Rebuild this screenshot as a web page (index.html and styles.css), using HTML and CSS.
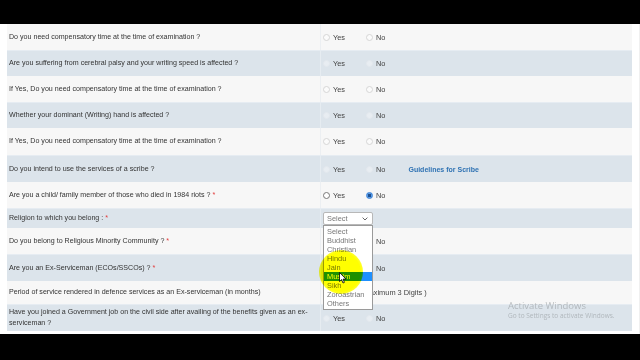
FILE: index.html
```html
<!DOCTYPE html>
<html>
<head>
<meta charset="utf-8">
<link rel="stylesheet" href="styles.css">
</head>
<body>
<div class="screen">
  <div class="bar top"></div>
  <div class="page">
    <div class="rows">
      <div class="row light h26">
        <div class="q">Do you need compensatory time at the time of examination ?</div>
        <div class="a"><span class="opt yes"><i class="radio"></i>Yes</span><span class="opt"><i class="radio"></i>No</span></div>
      </div>
      <div class="row blue h26">
        <div class="q">Are you suffering from cerebral palsy and your writing speed is affected ?</div>
        <div class="a"><span class="opt yes"><i class="radio"></i>Yes</span><span class="opt"><i class="radio"></i>No</span></div>
      </div>
      <div class="row light h26">
        <div class="q">If Yes, Do you need compensatory time at the time of examination ?</div>
        <div class="a"><span class="opt yes"><i class="radio"></i>Yes</span><span class="opt"><i class="radio"></i>No</span></div>
      </div>
      <div class="row blue h26">
        <div class="q">Whether your dominant (Writing) hand is affected ?</div>
        <div class="a"><span class="opt yes"><i class="radio"></i>Yes</span><span class="opt"><i class="radio"></i>No</span></div>
      </div>
      <div class="row light h27">
        <div class="q">If Yes, Do you need compensatory time at the time of examination ?</div>
        <div class="a"><span class="opt yes"><i class="radio"></i>Yes</span><span class="opt"><i class="radio"></i>No</span></div>
      </div>
      <div class="row blue h27">
        <div class="q">Do you intend to use the services of a scribe ?</div>
        <div class="a"><span class="opt yes"><i class="radio"></i>Yes</span><span class="opt"><i class="radio"></i>No</span><a class="guide">Guidelines for Scribe</a></div>
      </div>
      <div class="row light h26">
        <div class="q">Are you a child/ family member of those who died in 1984 riots ? <span class="req">*</span></div>
        <div class="a"><span class="opt yes"><i class="radio dark"></i>Yes</span><span class="opt"><i class="radio checked"></i>No</span></div>
      </div>
      <div class="row blue h20">
        <div class="q">Religion to which you belong : <span class="req">*</span></div>
        <div class="a">
          <div class="select">
            <span>Select</span>
            <svg class="chev" width="6" height="4" viewBox="0 0 6 4"><path d="M0.6 0.6 L3 3 L5.4 0.6" fill="none" stroke="#666" stroke-width="1"/></svg>
            <ul class="list">
              <li>Select</li>
              <li>Buddhist</li>
              <li>Christian</li>
              <li>Hindu</li>
              <li>Jain</li>
              <li class="hl">Muslim</li>
              <li>Sikh</li>
              <li>Zoroastrian</li>
              <li>Others</li>
            </ul>
          </div>
        </div>
      </div>
      <div class="row light h26">
        <div class="q">Do you belong to Religious Minority Community ? <span class="req">*</span></div>
        <div class="a"><span class="opt yes"><i class="radio"></i>Yes</span><span class="opt"><i class="radio"></i>No</span></div>
      </div>
      <div class="row blue h27">
        <div class="q">Are you an Ex-Serviceman (ECOs/SSCOs) ? <span class="req">*</span></div>
        <div class="a"><span class="opt yes"><i class="radio"></i>Yes</span><span class="opt"><i class="radio"></i>No</span></div>
      </div>
      <div class="row light h23">
        <div class="q">Period of service rendered in defence services as an Ex-serviceman (in months)</div>
        <div class="a"><span class="inputbox"></span><span class="hint">( Maximum 3 Digits )</span></div>
      </div>
      <div class="row blue h27">
        <div class="q two">Have you joined a Government job on the civil side after availing of the benefits given as an ex-serviceman ?</div>
        <div class="a"><span class="opt yes"><i class="radio"></i>Yes</span><span class="opt"><i class="radio"></i>No</span></div>
      </div>
    </div>
    <div class="spot"></div>
    <svg class="cursor" width="8" height="12" viewBox="0 0 8 12"><path d="M0.5 0.5 L0.5 9.5 L2.6 7.6 L4 11 L5.4 10.4 L4.1 7.1 L7 7.1 Z" fill="#fff" stroke="#000" stroke-width="0.8" stroke-linejoin="round"/></svg>
    <div class="watermark">
      <div class="wm1">Activate Windows</div>
      <div class="wm2">Go to Settings to activate Windows.</div>
    </div>
  </div>
  <div class="bar bottom"></div>
</div>
</body>
</html>
```

FILE: styles.css
```css
* { box-sizing: border-box; margin: 0; padding: 0; }
html, body { width: 640px; height: 360px; overflow: hidden; background: #000; }
body { font-family: "Liberation Sans", Arial, sans-serif; font-size: 7.1px; color: #333; }

.screen { display: flex; flex-direction: column; width: 640px; height: 360px; }
.bar { background: #000; flex: none; }
.bar.top { height: 24px; }
.bar.bottom { height: 26px; }

.page {
  position: relative;
  height: 310px;
  background: #fff;
  padding: 0 8px 0 7px;
  border-right: 1px solid #f0f0f0;
}
.rows { display: flex; flex-direction: column; width: 625px; }

.row { display: grid; grid-template-columns: 313px 1fr; align-items: stretch; }
.row.light { background: #f7f7f7; }
.row.blue { background: #dce4eb; border-top: 1px solid #e6ecf2; }
.h20 { height: 20px; }
.h23 { height: 23px; }
.h26 { height: 26px; }
.h27 { height: 27px; }

.q { display: flex; align-items: center; padding-left: 2px; line-height: 11px; white-space: nowrap; }
.q.two { white-space: normal; padding-right: 0; }
.req { color: #e23b3b; margin-left: 2px; }

.a { display: flex; align-items: center; padding-left: 2px; border-left: 1px solid #eceff2; font-size: 7.4px; }
.row.blue .a { border-left-color: #e6ecf1; }

.opt { display: inline-flex; align-items: center; gap: 3px; color: #444; }
.opt.yes { width: 43px; }
.radio {
  display: inline-block;
  width: 7px; height: 7px;
  border-radius: 50%;
  border: 1px solid #d6d6d6;
  background: #fbfbfb;
}
.row.blue .radio { border-color: #e3e8ed; background: #e8edf2; }
.radio.dark { border-color: #777; background: #fff; }
.radio.checked {
  border-color: #3b82d6;
  background: radial-gradient(circle, #1d4f8f 0 1.4px, #5b9ee8 1.8px);
}
.guide { color: #2f72b3; font-weight: bold; margin-left: 23px; font-size: 7px; }

.select {
  position: relative;
  width: 50px; height: 13px;
  border: 1px solid #b8b8b8;
  border-radius: 2px;
  background: #fff;
  display: flex; align-items: center; justify-content: space-between;
  padding: 0 4px 0 3px;
  color: #777;
}
.list {
  position: absolute;
  left: -1px; top: 12px;
  width: 50px;
  list-style: none;
  background: #fff;
  border: 1px solid #9a9a9a;
  padding: 1px 0;
  z-index: 3;
}
.list li { height: 9px; line-height: 9px; padding-left: 3px; color: #777; }
.list li.hl { background: #1e90ff; color: #fff; }

.inputbox { display: inline-block; width: 36px; height: 12px; }
.hint { color: #444; }

.spot {
  position: absolute;
  left: 319px; top: 226px;
  width: 44px; height: 44px;
  border-radius: 50%;
  background: radial-gradient(circle, #ffff00 0 62%, rgba(255,255,0,0.6) 80%, rgba(255,255,0,0) 100%);
  mix-blend-mode: multiply;
  z-index: 4;
}
.cursor { position: absolute; left: 339px; top: 248px; z-index: 5; }

.watermark { position: absolute; left: 508px; top: 276px; color: rgba(140,145,150,0.55); font-family: "Open Sans", "DejaVu Sans", sans-serif; z-index: 6; }
.wm1 { font-size: 9.5px; line-height: 11px; }
.wm2 { font-size: 6.5px; line-height: 10px; }
```
